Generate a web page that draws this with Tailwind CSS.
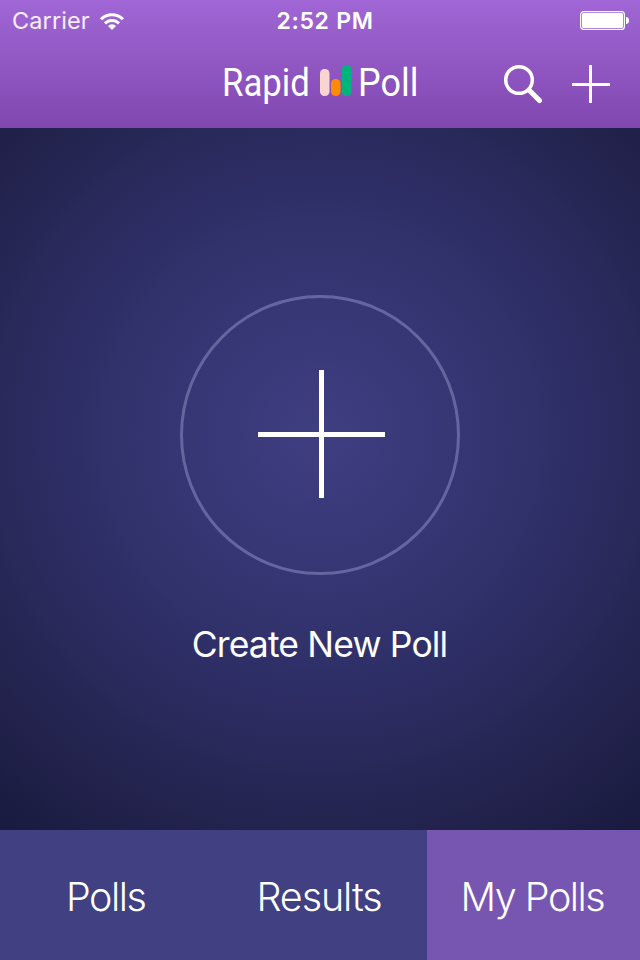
<!DOCTYPE html>
<html lang="en">
<head>
    <meta charset="UTF-8">
    <meta name="viewport" content="width=device-width, initial-scale=1.0">
    <title>Rapid Poll</title>
    <script src="https://cdn.jsdelivr.net/npm/@tailwindcss/browser@4"></script>
</head>
<body class="w-[640px] h-[960px] overflow-hidden flex flex-col text-white font-['Inter',sans-serif]">
    <header class="h-32 shrink-0 bg-linear-to-b from-[#a066d5] to-[#8147b0]">
        <!-- Status bar -->
        <div class="h-10 grid grid-cols-[210px_1fr_210px] items-center pl-3 pr-[11px]">
            <div class="flex items-center gap-[9px]">
                <span class="text-[23.5px] leading-10 pt-px tracking-[0.1px] text-white/90">Carrier</span>
                <svg class="w-[26px] h-5" viewBox="0 0 26 20" fill="none" stroke="white" stroke-width="3">
                    <path d="M2 8.2a15.6 15.6 0 0 1 22 0"/>
                    <path d="M6 12.4a9.9 9.9 0 0 1 14 0"/>
                    <path d="M13 19l-4-4a5.7 5.7 0 0 1 8 0z" fill="white" stroke="none"/>
                </svg>
            </div>
            <span class="text-center text-[23px] leading-10 pt-px pl-[9px] font-semibold tracking-[0.7px] whitespace-nowrap">2:52 PM</span>
            <svg class="w-[49px] h-[19px] justify-self-end" viewBox="0 0 49 19">
                <rect x="0.6" y="0.6" width="43.8" height="17.8" rx="3" fill="none" stroke="white" stroke-width="1.2"/>
                <rect x="2" y="2" width="41" height="15" rx="1.5" fill="white"/>
                <path d="M46 6c2 0 3 1.5 3 3.5s-1 3.5-3 3.5z" fill="white"/>
            </svg>
        </div>

        <!-- Nav bar -->
        <div class="h-[88px] grid grid-cols-[221px_97px_36px_64px_1fr] items-start">
            <h1 class="contents font-['Roboto',sans-serif] font-normal text-[39.5px] leading-[46px] whitespace-nowrap">
                <span class="col-start-2 mt-5 ml-px origin-left scale-x-[0.88]">Rapid</span>
                <svg class="w-8 h-8 mt-[25px] ml-[2px]" viewBox="0 0 32 32">
                    <rect x="0" y="4" width="9.5" height="27" rx="4.5" fill="#f8d5d0"/>
                    <rect x="11" y="14" width="9.5" height="17" rx="4.5" fill="#ff8c00"/>
                    <rect x="22" y="0" width="9.5" height="31" rx="4.5" fill="#00b47e"/>
                </svg>
                <span class="mt-5 ml-[4px] origin-left scale-x-[0.91]">Poll</span>
            </h1>
            <div class="flex items-start gap-[28px] pt-6 pl-[86px]">
                <svg class="w-10 h-10 shrink-0" viewBox="0 0 40 40" fill="none" stroke="white">
                    <circle cx="15" cy="16" r="13.3" stroke-width="3.5"/>
                    <path d="M25 26l10.5 10.5" stroke-width="5" stroke-linecap="round"/>
                </svg>
                <svg class="w-[38px] h-10 shrink-0" viewBox="0 0 38 40" fill="white">
                    <rect x="17" y="1" width="3" height="38"/>
                    <rect x="0" y="19" width="38" height="3"/>
                </svg>
            </div>
        </div>
    </header>

    <main class="grow flex flex-col items-center pt-[167px] bg-[radial-gradient(circle_510px_at_50%_307px,#3e3e82_0%,#373776_25%,#2e2e66_50%,#242450_76%,#191a3e_100%)]">
        <button class="w-[280px] h-[280px] rounded-full border-3 border-[#66659f]">
            <svg class="w-[274px] h-[274px]" viewBox="0 0 274 274" fill="white">
                <rect x="136" y="72" width="5" height="128"/>
                <rect x="75" y="134" width="127" height="5"/>
            </svg>
        </button>
        <p class="mt-[46px] pr-px text-[35.5px] leading-[48px] tracking-[-0.85px] whitespace-nowrap">Create New Poll</p>
    </main>

    <!-- Tab bar -->
    <nav class="h-[130px] shrink-0 grid grid-cols-3 bg-[#404082] text-center text-[39.5px] leading-[134px] font-light whitespace-nowrap">
        <a class="pr-[2px] tracking-[-1.5px]">Polls</a>
        <a class="pr-[2px] tracking-[-1.1px]">Results</a>
        <a class="h-[130px] pr-[2px] bg-[#7756b1] tracking-[-1.5px]">My Polls</a>
    </nav>
</body>
</html>
